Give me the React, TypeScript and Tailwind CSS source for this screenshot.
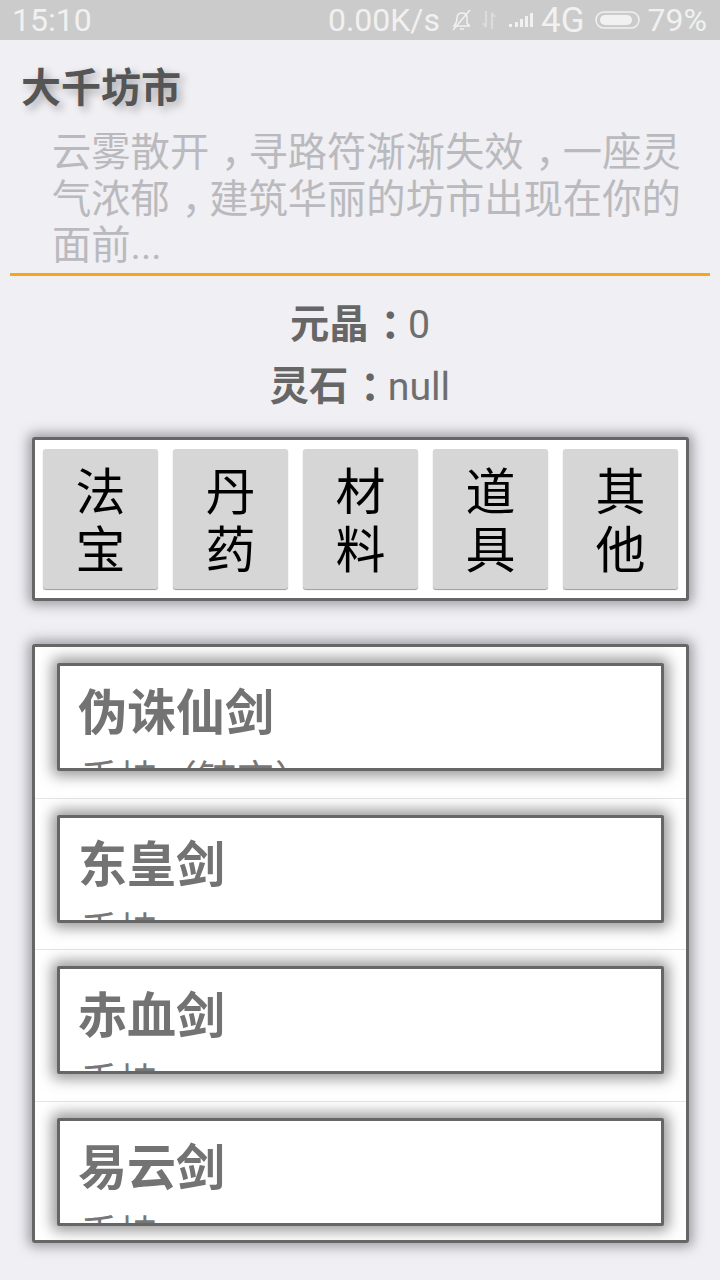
const categories = [
  ["法", "宝"],
  ["丹", "药"],
  ["材", "料"],
  ["道", "具"],
  ["其", "他"],
];

const items = [
  { name: "伪诛仙剑", kind: "手持（钝宝）" },
  { name: "东皇剑", kind: "手持" },
  { name: "赤血剑", kind: "手持" },
  { name: "易云剑", kind: "手持" },
];

const font = { fontFamily: 'Roboto, "Noto Sans CJK SC", sans-serif' };

// full-width punctuation sits in the middle of its cell in the reference
function Punct({ children }: { children: string }) {
  return <span className="inline-block translate-x-[0.3em]">{children}</span>;
}

function StatusBar() {
  return (
    <div className="h-10 bg-[#cbcbcb] flex items-center justify-between pl-3 pr-[13px] text-[32px] leading-none text-[#f1f1f1]">
      <span>15:10</span>
      <div className="flex items-center">
        <span>0.00K/s</span>
        {/* muted bell */}
        <svg width="22" height="24" viewBox="0 0 22 24" className="ml-[11px]" fill="none" stroke="#f1f1f1" strokeWidth="1.5">
          <path d="M3 18c2-2 3-4 3-8 0-3 2-5 5-5s5 2 5 5v4c0 2 1 3 3 4H3z" />
          <path d="M9 21h4" />
          <path d="M2 22L19 2" />
        </svg>
        {/* data arrows */}
        <svg width="16" height="24" viewBox="0 0 16 24" className="ml-2" fill="none" stroke="#dcdcdc" strokeWidth="2">
          <path d="M5 3v16M2 15l3 4" />
          <path d="M11 21V5M14 9l-3-4" />
        </svg>
        {/* signal */}
        <svg width="26" height="18" viewBox="0 0 26 18" className="ml-3" fill="#f1f1f1">
          <rect x="0" y="13" width="3" height="3" />
          <rect x="6" y="11" width="3" height="5" />
          <rect x="11" y="8" width="3" height="8" />
          <rect x="16" y="5" width="3" height="11" />
          <rect x="21" y="2" width="3" height="14" />
        </svg>
        <span className="ml-[6px] text-[35px]">4G</span>
        {/* battery */}
        <svg width="46" height="24" viewBox="0 0 46 24" className="ml-[10px]" fill="none">
          <rect x="1" y="4" width="43" height="16" rx="8" stroke="#f1f1f1" strokeWidth="1.5" />
          <rect x="5" y="7" width="32" height="10" rx="5" fill="#f1f1f1" />
        </svg>
        <span className="ml-[7px]">79%</span>
      </div>
    </div>
  );
}

function ItemRow({ name, kind }: { name: string; kind: string }) {
  return (
    <div className="h-[151.5px] pt-[16px] px-[22px] border-b border-[#e6e6e6] last:border-b-0">
      <div className="h-[108px] overflow-hidden bg-white border-[3px] border-[#666] rounded-[2px] shadow-[0_0_14px_5px_rgba(70,70,70,0.55)] pl-[18px] pt-[18px]">
        <div className="text-[49px] leading-[60px] font-bold text-[#737373]">{name}</div>
        <div className="text-[39px] leading-[44px] mt-[14px] pl-[2px] text-[#777]">{kind}</div>
      </div>
    </div>
  );
}

export default function App() {
  return (
    <div className="w-[720px] h-[1280px] overflow-hidden bg-[#efeff4]" style={font}>
      <StatusBar />

      {/* header */}
      <div className="mx-[10px] h-[236px] border-b-[3px] border-[#f7a714]">
        <div className="pl-[11px] pt-[27px] text-[40px] leading-[44px] font-bold text-[#555] [text-shadow:4px_4px_8px_rgba(0,0,0,0.3)]">
          大千坊市
        </div>
        <div className="pl-[42px] pr-[20px] mt-[19px] text-[39.3px] leading-[46.5px] text-[#bababe]">
          云雾散开<Punct>，</Punct>寻路符渐渐失效<Punct>，</Punct>一座灵气浓郁<Punct>，</Punct>建筑华丽的坊市出现在你的面前...
        </div>
      </div>

      {/* balance */}
      <div className="mt-[27px] flex flex-col items-center text-[39.3px] leading-[44px] text-[#6e6e6e]">
        <div>
          <span className="font-bold text-[#666]">
            元晶<Punct>：</Punct>
          </span>
          0
        </div>
        <div className="mt-[18px]">
          <span className="font-bold text-[#666]">
            灵石<Punct>：</Punct>
          </span>
          null
        </div>
      </div>

      {/* category tabs */}
      <div className="ml-8 mt-[28px] w-[657px] h-[164px] bg-white border-[3px] border-[#666] rounded-[3px] shadow-[0_0_12px_4px_rgba(80,80,90,0.5)] flex justify-center gap-[15px] pt-[9px]">
        {categories.map((c) => (
          <div
            key={c[0]}
            className="w-[115px] h-[140px] bg-[#d6d6d6] rounded-[3px] shadow-[0_1px_1px_rgba(0,0,0,0.4)] pt-[6px] flex flex-col items-center justify-center text-[50px] leading-[58px] text-black"
          >
            <span>{c[0]}</span>
            <span>{c[1]}</span>
          </div>
        ))}
      </div>

      {/* item list */}
      <div className="ml-8 mt-[43px] w-[657px] h-[599px] overflow-hidden bg-white border-[3px] border-[#666] rounded-[3px] shadow-[0_0_12px_4px_rgba(80,80,90,0.5)]">
        {items.map((item) => (
          <ItemRow key={item.name} name={item.name} kind={item.kind} />
        ))}
      </div>
    </div>
  );
}
